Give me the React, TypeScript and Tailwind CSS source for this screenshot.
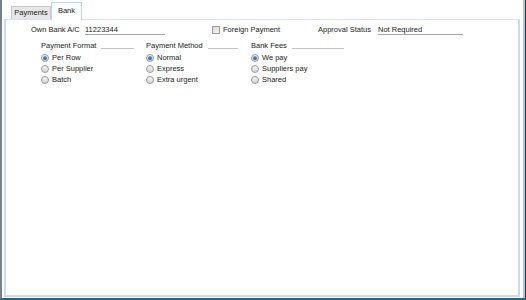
import React from 'react';

type RadioProps = { label: string; checked?: boolean };

function Radio({ label, checked }: RadioProps) {
  return (
    <div className="flex h-[11px] items-center gap-[3px]">
      <span className="flex h-[8px] w-[8px] items-center justify-center rounded-full border border-[#9a9a9a] bg-gradient-to-b from-[#f4f4f4] to-[#d6d6d6]">
        {checked && <span className="h-[4px] w-[4px] rounded-full bg-gradient-to-b from-[#5aa0e0] to-[#1d5c9e]" />}
      </span>
      <span>{label}</span>
    </div>
  );
}

function Group({ title, items, checked, headerWidth, width }: { title: string; items: string[]; checked: number; headerWidth: string; width: string }) {
  return (
    <div className={width}>
      <div className={`flex h-[10px] items-start gap-[5px] ${headerWidth}`}>
        <span className="leading-[10px]">{title}</span>
        <div className="h-[8px] flex-1 border-b border-[#c4c4c4]" />
      </div>
      <div className="mt-[1px]">
        {items.map((it, i) => (
          <Radio key={it} label={it} checked={i === checked} />
        ))}
      </div>
    </div>
  );
}

export default function App() {
  return (
    <div
      className="flex h-[300px] w-[526px] overflow-hidden border-b-2 border-l-2 border-r border-b-[#1e6888] border-l-[#74808c] border-r-[#1c3f63] bg-white text-[7.5px] text-[#1b1b1b]"
      style={{ fontFamily: '"Liberation Sans", Arial, sans-serif' }}
    >
      <div className="flex flex-1 flex-col border-r-2 border-[#a9c8e6] pl-[2px] pr-[3px] pb-[1px]">
        {/* tabs */}
        <div className="flex h-[19px] items-end pl-[7px]">
          <div className="flex h-[13px] w-[40px] items-center justify-center border border-b-0 border-[#c9c9c9] bg-[#e6e6e6]">
            Payments
          </div>
          <div className="relative top-[1px] flex h-[18px] w-[31px] items-center justify-center border-x border-t border-[#bcd5ee] bg-white pb-[2px]">
            Bank
          </div>
        </div>
        {/* panel */}
        <div className="flex-1 border-x-2 border-b-2 border-t border-[#c8dbf0] border-t-[#d4e5f7]">
          <div className="mt-[5px] flex h-[10px] items-center pl-[25px]">
            <span className="w-[54px]">Own Bank A/C</span>
            <div className="flex h-[10px] w-[80px] items-center border-b border-[#a6a6a6]">11223344</div>
            <div className="ml-[47px] flex w-[106px] items-center gap-[3px]">
              <span className="h-[8px] w-[8px] border border-[#9b9b9b] bg-gradient-to-br from-[#dcdcdc] to-[#f4f4f4]" />
              <span>Foreign Payment</span>
            </div>
            <span className="w-[60px]">Approval Status</span>
            <div className="flex h-[10px] w-[85px] items-center border-b border-[#a6a6a6]">Not Required</div>
          </div>
          <div className="mt-[6px] flex pl-[35px]">
            <Group title="Payment Format" items={['Per Row', 'Per Supplier', 'Batch']} checked={0} headerWidth="w-[93px]" width="w-[105px]" />
            <Group title="Payment Method" items={['Normal', 'Express', 'Extra urgent']} checked={0} headerWidth="w-[92px]" width="w-[105px]" />
            <Group title="Bank Fees" items={['We pay', 'Suppliers pay', 'Shared']} checked={0} headerWidth="w-[93px]" width="w-[100px]" />
          </div>
        </div>
      </div>
    </div>
  );
}
